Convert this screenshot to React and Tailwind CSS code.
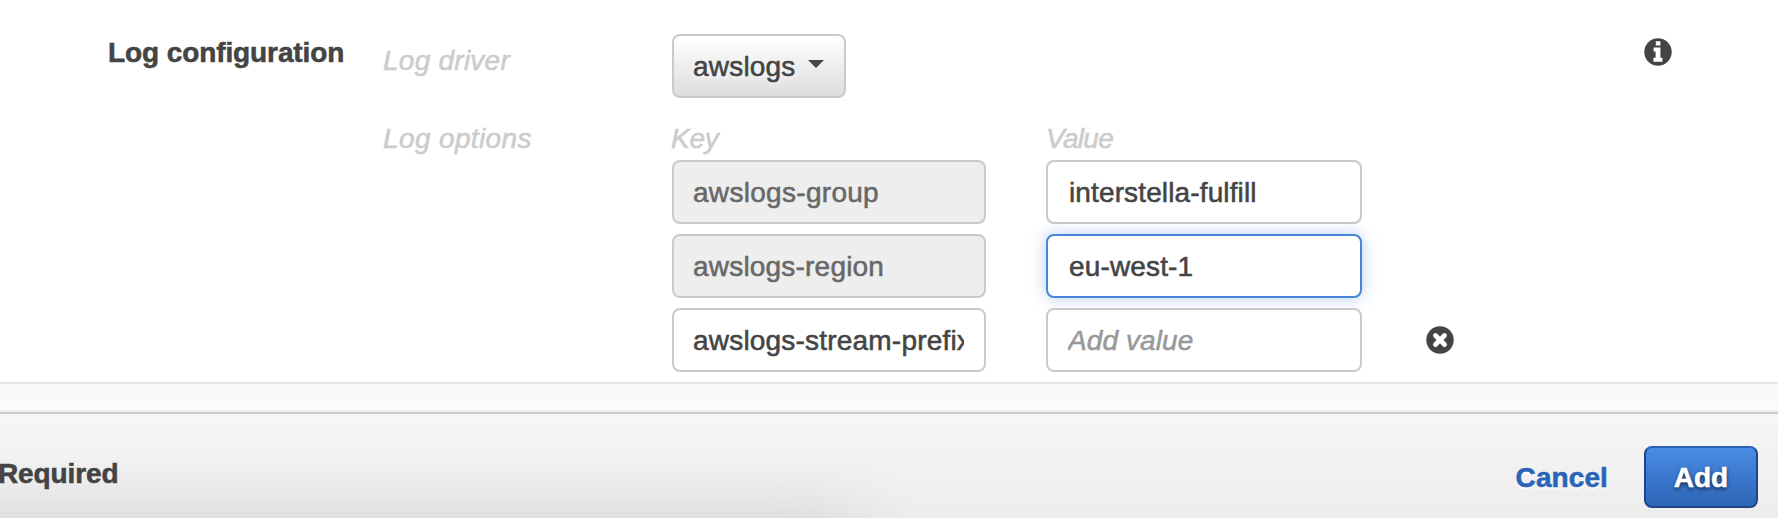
import React from "react";

const field =
  "block h-16 rounded-lg border-2 pt-0.5 pr-5 text-[28px] outline-none";

function Field({ value, placeholder, variant = "normal", className }) {
  const look =
    variant === "disabled"
      ? "border-[#cacaca] bg-[#eeeeee] text-[#686868]"
      : variant === "focused"
        ? "border-[#4a86d8] bg-white text-[#444444] shadow-[0_0_16px_rgba(74,134,216,0.4)]"
        : "border-[#cacaca] bg-white text-[#444444]";
  return (
    <input
      readOnly
      value={value}
      placeholder={placeholder}
      className={`${field} ${look} ${className} placeholder:italic placeholder:text-[#999999] placeholder:opacity-100`}
    />
  );
}

function InfoIcon() {
  return (
    <svg width="28" height="28" viewBox="0 0 28 28" className="block">
      <circle cx="14" cy="14" r="13.7" fill="#444444" />
      <path fill="#ffffff" d="M11.8 3.2h4.6v4.4h-4.6zM9.6 9.6h6.8v10.2h2v4H9.4v-4h2.2v-6.4h-2z" />
    </svg>
  );
}

function RemoveIcon() {
  return (
    <svg width="28" height="28" viewBox="0 0 28 28" className="block">
      <circle cx="14" cy="14" r="13.7" fill="#444444" />
      <path d="M9.5 9.5l9 9M18.5 9.5l-9 9" stroke="#ffffff" strokeWidth="4.8" strokeLinecap="round" />
    </svg>
  );
}

export default function App() {
  return (
    <div className="flex h-[518px] w-[1778px] flex-col overflow-hidden bg-white font-['Liberation_Sans',Arial,sans-serif] text-[28px] leading-10 text-[#444444] [-webkit-text-stroke:0.55px]">
      <section className="flex h-[382px] shrink-0 pl-[108px]">
        <h2 className="w-[275px] shrink-0 pt-[33px] font-bold tracking-[-0.1px]">Log configuration</h2>

        <div className="flex w-[289px] shrink-0 flex-col gap-[38px] pt-[41px] italic text-[#cccccc]">
          <span className="tracking-[0.25px]">Log driver</span>
          <span className="tracking-[0.37px]">Log options</span>
        </div>

        <div className="flex flex-col pt-[34px]">
          <button className="flex h-16 w-[174px] items-center rounded-lg border-2 border-[#cacaca] bg-linear-to-b from-white to-[#dddddd] pl-[19px] [text-shadow:0_2px_6px_#ffffff]">
            <span className="w-[115px] pt-0.5 text-left tracking-[0.2px]">awslogs</span>
            <svg width="16" height="8" viewBox="0 0 16 8" className="-mt-1">
              <path d="M0 0h16L8 8z" fill="#444444" />
            </svg>
          </button>
          <div className="flex pt-[21px]">
            <div className="flex w-[374px] flex-col gap-2.5">
              <span className="-mb-2.5 -ml-px h-[41px] italic tracking-[-0.2px] text-[#cccccc]">Key</span>
              <Field value="awslogs-group" variant="disabled" className="w-[314px] pl-[19px] tracking-[0.3px]" />
              <Field value="awslogs-region" variant="disabled" className="w-[314px] pl-[19px] tracking-[0.2px]" />
              <Field value="awslogs-stream-prefix" className="w-[314px] pl-[19px] tracking-[0.2px]" />
            </div>
            <div className="flex w-[380px] flex-col gap-2.5">
              <span className="-mb-2.5 h-[41px] italic tracking-[-0.7px] text-[#cccccc]">Value</span>
              <Field value="interstella-fulfill" className="w-[316px] pl-[21px] tracking-[0.13px]" />
              <Field value="eu-west-1" variant="focused" className="w-[316px] pl-[21px] tracking-[0.15px]" />
              <Field value="" placeholder="Add value" className="w-[316px] pl-5 tracking-[0.1px]" />
            </div>
            <div className="pt-[207px]">
              <RemoveIcon />
            </div>
          </div>
        </div>

        <div className="ml-auto mr-[106px] pt-[38px]">
          <InfoIcon />
        </div>
      </section>

      <div className="h-[30px] shrink-0 border-t-2 border-b-2 border-t-[#e6e6e6] border-b-[#eeeeee] bg-linear-to-b from-[#f8f8f8] to-[#fbfbfb]" />

      <footer className="relative flex h-[106px] shrink-0 items-start overflow-hidden border-t-2 border-[#cacaca] bg-linear-to-b from-[#f6f6f6] to-[#ededed] pr-5 font-bold">
        <div className="absolute top-[106px] -left-40 h-[300px] w-[1020px] rounded-2xl shadow-[0_0_80px_rgba(0,0,0,0.12)]" />
        <span className="relative -ml-0.5 pt-10 tracking-[-0.1px]">Required</span>
        <div className="relative ml-auto flex pt-8">
          <a className="mr-9 pt-3 tracking-[0.1px] text-[#2a64b8] [text-shadow:0_2px_2px_#ffffff]">Cancel</a>
          <button className="h-[62px] w-[114px] rounded-lg border-2 border-[#1c4687] border-t-[#2a62b5] bg-linear-to-b from-[#4a8de6] to-[#2d65b6] pt-0.5 text-white [text-shadow:0_2px_4px_rgba(0,0,0,0.7)]">
            Add
          </button>
        </div>
      </footer>
    </div>
  );
}
